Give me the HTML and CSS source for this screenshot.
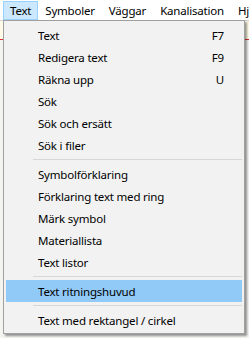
FILE: index.html
```html
<!DOCTYPE html>
<html>
<head>
<meta charset="utf-8">
<link rel="stylesheet" href="styles.css">
</head>
<body>
<div class="menubar">
  <div class="mb-item active">Text</div>
  <div class="mb-item">Symboler</div>
  <div class="mb-item">Väggar</div>
  <div class="mb-item">Kanalisation</div>
  <div class="mb-item">Hjälp</div>
</div>
<div class="workspace">
  <div class="toolbar"></div>
  <div class="redline"></div>
</div>
<div class="menu">
  <div class="item"><span>Text</span><span class="key">F7</span></div>
  <div class="item"><span>Redigera text</span><span class="key">F9</span></div>
  <div class="item"><span>Räkna upp</span><span class="key">U</span></div>
  <div class="item"><span>Sök</span></div>
  <div class="item"><span>Sök och ersätt</span></div>
  <div class="item"><span>Sök i filer</span></div>
  <div class="sep"></div>
  <div class="item"><span>Symbolförklaring</span></div>
  <div class="item"><span>Förklaring text med ring</span></div>
  <div class="item"><span>Märk symbol</span></div>
  <div class="item"><span>Materiallista</span></div>
  <div class="item"><span>Text listor</span></div>
  <div class="sep"></div>
  <div class="item hot"><span>Text ritningshuvud</span></div>
  <div class="sep"></div>
  <div class="item"><span>Text med rektangel / cirkel</span></div>
</div>
</body>
</html>
```

FILE: styles.css
```css
html, body {
  margin: 0;
  padding: 0;
  background: #ffffff;
  width: 249px;
  height: 338px;
  overflow: hidden;
  font-family: "Noto Sans", "Open Sans", sans-serif;
  font-size: 11.5px;
  letter-spacing: -0.2px;
  color: #000;
}

.menubar {
  display: flex;
  height: 20px;
  padding-left: 3px;
  white-space: nowrap;
  background: #ffffff;
  overflow: hidden;
}

.mb-item {
  box-sizing: border-box;
  margin-top: 1px;
  height: 19px;
  line-height: 17px;
  padding: 0 6px;
  border: 1px solid transparent;
}

.mb-item.active {
  background: #cce8ff;
  border-color: #99d1ff;
}

.workspace {
  height: 318px;
  background: #f3f3f0;
}

.toolbar {
  height: 18px;
  border-top: 1px solid #d0d0d0;
  background: #fffbe8;
}

.redline {
  height: 1px;
  background: #e03030;
}

.menu {
  position: absolute;
  left: 3px;
  top: 20px;
  width: 242px;
  box-sizing: border-box;
  padding: 3px 2px 2px 2px;
  background: #f2f2f2;
  border: 1px solid #a0a0a0;
  box-shadow: 2px 2px 2px rgba(0, 0, 0, 0.4);
}

.item {
  display: flex;
  justify-content: space-between;
  align-items: center;
  height: 22px;
  padding-left: 32px;
  padding-right: 18px;
  white-space: nowrap;
}

.item.hot {
  background: #91c9f7;
}

.sep {
  height: 7px;
  margin-left: 27px;
  box-sizing: border-box;
  padding-top: 3px;
}

.sep::before {
  content: "";
  display: block;
  height: 1px;
  background: #d7d7d7;
}
```
